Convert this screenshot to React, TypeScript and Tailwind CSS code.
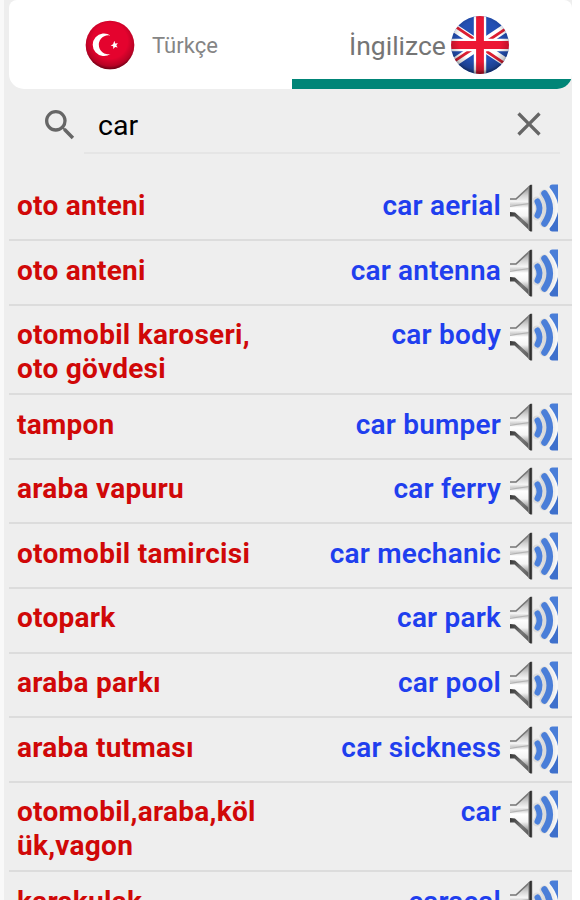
const words = [
  { tr: ['oto anteni'], en: 'car aerial' },
  { tr: ['oto anteni'], en: 'car antenna' },
  { tr: ['otomobil karoseri,', 'oto gövdesi'], en: 'car body' },
  { tr: ['tampon'], en: 'car bumper' },
  { tr: ['araba vapuru'], en: 'car ferry' },
  { tr: ['otomobil tamircisi'], en: 'car mechanic' },
  { tr: ['otopark'], en: 'car park' },
  { tr: ['araba parkı'], en: 'car pool' },
  { tr: ['araba tutması'], en: 'car sickness' },
  { tr: ['otomobil,araba,köl', 'ük,vagon'], en: 'car' },
  { tr: ['karakulak'], en: 'caracal' },
];

function Defs() {
  return (
    <svg width="0" height="0" className="absolute" aria-hidden="true">
      <defs>
        <linearGradient id="cone" x1="0" y1="0" x2="0" y2="1">
          <stop offset="0" stopColor="#8a8a8a" />
          <stop offset="0.22" stopColor="#d4d4d4" />
          <stop offset="0.35" stopColor="#f4f4f4" />
          <stop offset="0.42" stopColor="#d0d0d0" />
          <stop offset="0.5" stopColor="#fff" />
          <stop offset="0.68" stopColor="#f4f4f4" />
          <stop offset="0.85" stopColor="#a0a0a0" />
          <stop offset="1" stopColor="#555" />
        </linearGradient>
        <linearGradient id="rim" x1="0" y1="0" x2="1" y2="0">
          <stop offset="0" stopColor="#999" />
          <stop offset="0.5" stopColor="#2a2a2a" />
          <stop offset="1" stopColor="#555" />
        </linearGradient>
        <linearGradient id="lower" x1="0" y1="0" x2="1" y2="1">
          <stop offset="0" stopColor="#333" />
          <stop offset="0.5" stopColor="#777" />
          <stop offset="1" stopColor="#555" />
        </linearGradient>
        <radialGradient id="shade" cx="0.5" cy="0.42" r="0.6">
          <stop offset="0.6" stopColor="#000" stopOpacity="0" />
          <stop offset="0.85" stopColor="#000" stopOpacity="0.2" />
          <stop offset="1" stopColor="#000" stopOpacity="0.65" />
        </radialGradient>
        <clipPath id="ukClip">
          <circle cx="30" cy="30" r="29" />
        </clipPath>
        <clipPath id="speakerClip">
          <rect width="48" height="48" />
        </clipPath>
      </defs>
    </svg>
  );
}

function TurkishFlag() {
  return (
    <svg width="50" height="50" viewBox="0 0 50 50" className="shrink-0">
      <circle cx="25" cy="25" r="24.3" fill="#e4032e" />
      <circle cx="25" cy="25" r="24.3" fill="url(#shade)" />
      <path d="M25.500 15.500A11.300 11.300 0 1 0 25.500 34A9.500 9.500 0 1 1 25.500 15.500Z" fill="#fff" />
      <path d="M29.300 20.800l.9 2.600 2.700-.2-1.600 2 1.300 2.200-2.500-.5-1.700 2-.3-2.600-2.500-.9 2.500-1.200z" fill="#fff" />
    </svg>
  );
}

function BritishFlag() {
  return (
    <svg width="60" height="60" viewBox="0 0 60 60" className="shrink-0">
      <g clipPath="url(#ukClip)">
        <rect width="60" height="60" fill="#2450b4" />
        <path d="M0 10L60 50M60 10L0 50" stroke="#fff" strokeWidth="8.500" />
        <path d="M0 8L30 28M60 11L30 31M0 49L30 29M60 52L30 32" stroke="#dc1e32" strokeWidth="2.800" />
        <path d="M30 0V60M0 30H60" stroke="#fff" strokeWidth="12.400" />
        <path d="M30 0V60M0 30H60" stroke="#ec1834" strokeWidth="7.800" />
        <circle cx="30" cy="30" r="29" fill="url(#shade)" />
      </g>
    </svg>
  );
}

function Speaker() {
  return (
    <svg width="48" height="48" viewBox="0 0 48 48" className="mt-[7.500px] shrink-0">
      <path d="M0 15H6L20 2V46L5 32H0Z" fill="url(#cone)" />
      <path d="M0 28L5 28.500L20 42V47L4.500 32.500H0Z" fill="url(#lower)" />
      <path d="M0 15H6L20 2" fill="none" stroke="#777" strokeWidth="1.700" />
      <path d="M0 22.300L19 19.500" stroke="#b4b4b4" strokeWidth="1.200" />
      <path d="M18.300 2.500L20.500 .8H22.200V47.500H20.500L18.300 46Z" fill="url(#rim)" />
      <g clipPath="url(#speakerClip)" fill="none">
        <path d="M27 17Q33 24.500 27 32" stroke="#dcdcdc" strokeWidth="9" strokeLinecap="round" />
        <path d="M34 10Q43 24.500 34 39" stroke="#dadada" strokeWidth="9" strokeLinecap="round" />
        <path d="M39.500 3Q47 12 47 24Q47 36 39.500 45" stroke="#f6f6f6" strokeWidth="3" />
        <path d="M27.500 17.500Q31.500 24.500 27.500 31.500" stroke="#4a80dc" strokeWidth="6" strokeLinecap="round" />
        <path d="M34.500 9.500Q45 24.500 34.500 39.500" stroke="#4a7ed8" strokeWidth="6.500" strokeLinecap="round" />
        <path d="M39.500 3.500Q39.500 .5 42.500 .5H48V20Q46 11 39.500 3.500Z" fill="#4a7ed8" />
        <path d="M39.500 44.500Q39.500 47.500 42.500 47.500H48V28Q46 37 39.500 44.500Z" fill="#3e70cc" />
      </g>
    </svg>
  );
}

function Tabs() {
  return (
    <div className="ml-[5px] flex h-[89px] overflow-hidden rounded-t-[8px] rounded-b-[15px] bg-white text-[#757575]">
      <div className="flex w-[283px] items-center pl-[76px]">
        <TurkishFlag />
        <span className="ml-[17px] mt-[2px] text-[22px] leading-7 text-[#858585]">Türkçe</span>
      </div>
      <div className="flex flex-1 items-center border-b-[10px] border-[#008577] pl-[57px]">
        <span className="mt-[12px] w-[101px] text-[26.500px] leading-8">İngilizce</span>
        <span className="mt-[10px]">
          <BritishFlag />
        </span>
      </div>
    </div>
  );
}

function SearchBar() {
  return (
    <div className="flex h-[87px] pl-10 pr-3">
      <svg width="40" height="40" viewBox="0 0 24 24" className="mt-4 -ml-1 shrink-0" fill="#666">
        <path d="M15.500 14h-.79l-.28-.27A6.470 6.470 0 0 0 16 9.500 6.500 6.500 0 1 0 9.500 16c1.610 0 3.090-.59 4.230-1.570l.27.28v.79l5 4.990L20.490 19l-4.990-5zm-6 0C7.010 14 5 11.990 5 9.500S7.010 5 9.500 5 14 7.010 14 9.500 11.990 14 9.500 14z" />
      </svg>
      <div className="ml-[4px] flex h-[65px] flex-1 justify-between border-b-2 border-[#e5e5e5] pl-[14px]">
        <span className="mt-[21px] text-[28.500px] leading-8 text-black">car</span>
        <svg width="40" height="40" viewBox="0 0 24 24" className="mt-[15px] mr-[11px]" fill="#666">
          <path d="M19 6.410L17.590 5 12 10.590 6.410 5 5 6.410 10.590 12 5 17.590 6.410 19 12 13.410 17.590 19 19 17.590 13.410 12z" />
        </svg>
      </div>
    </div>
  );
}

export default function App() {
  return (
    <div className="h-[900px] w-[580px] overflow-hidden bg-white font-['Roboto',sans-serif]">
      <Defs />
      <div className="h-full w-[572px] border-l-4 border-[#f9f9f9] bg-[#eee]">
        <Tabs />
        <SearchBar />
        <ul className="ml-[5px] pt-[0.600px]">
          {words.map((word, i) => (
            <li
              key={i}
              className={`flex border-b-2 border-[#dcdcdc] pl-2 pr-[14px] text-[28px] leading-[33.400px] ${
                word.tr.length > 1 ? 'h-[89.400px]' : 'h-[64.600px]'
              }`}
            >
              <div className="flex-1 pt-[12.500px] font-bold tracking-[0.270px] text-[#d00808]">
                {word.tr.map(line => (
                  <div key={line}>{line}</div>
                ))}
              </div>
              <div className="mr-[9px] pt-[12.500px] font-semibold tracking-[0.200px] text-[#1f3fee]">{word.en}</div>
              <Speaker />
            </li>
          ))}
        </ul>
      </div>
    </div>
  );
}
